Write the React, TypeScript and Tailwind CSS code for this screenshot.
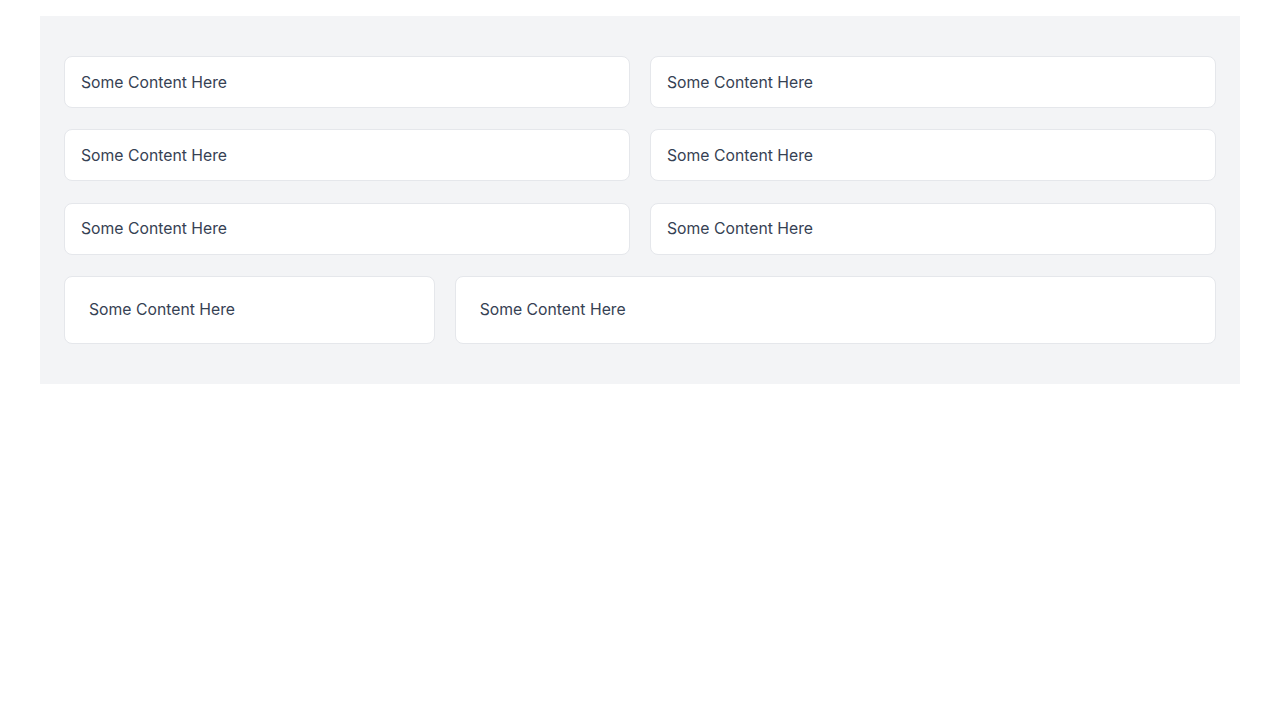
import React from 'react';

const Card: React.FC<{ className?: string }> = ({ className = '' }) => (
  <div
    className={`bg-white border border-gray-200 rounded-lg text-[15.75px] leading-6 text-gray-700 ${className}`}
  >
    Some Content Here
  </div>
);

const App: React.FC = () => {
  return (
    <div className="min-h-screen bg-white pt-4" style={{ fontFamily: 'Inter, "Noto Sans", sans-serif' }}>
      <div className="mx-auto w-[1200px] bg-gray-100 px-6 pt-10 pb-10">
        <div className="grid grid-cols-2 gap-x-5 gap-y-[21.33px]">
          {Array.from({ length: 6 }).map((_, i) => (
            <Card key={i} className="px-4 pt-[13.5px] pb-[12.5px]" />
          ))}
        </div>
        <div className="grid grid-cols-3 gap-5 mt-[21.33px]">
          <Card className="px-6 pt-[21.5px] pb-[20.5px]" />
          <Card className="col-span-2 px-6 pt-[21.5px] pb-[20.5px]" />
        </div>
      </div>
    </div>
  );
};

export default App;
